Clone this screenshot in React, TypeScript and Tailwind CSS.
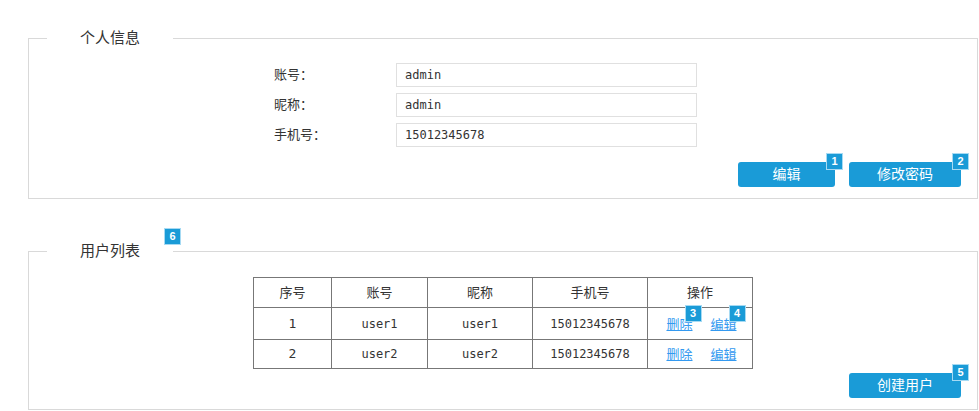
const font = {
  fontFamily: '"DejaVu Sans Mono", "Noto Sans CJK SC", monospace',
};

function Badge({ n, className = "" }: { n: number; className?: string }) {
  return (
    <span
      className={`absolute flex size-[17px] items-center justify-center border border-[#a6daf3] bg-[#1a9bd7] text-[11px] font-bold leading-none text-white ${className}`}
      style={{ fontFamily: '"Liberation Sans", Arial, sans-serif' }}
    >
      {n}
    </span>
  );
}

function BlueButton({ label, width, badge }: { label: string; width: string; badge: number }) {
  return (
    <button
      className={`relative h-[25px] ${width} rounded-[3px] bg-[#1a9bd7] text-[14px] text-white`}
    >
      {label}
      <Badge n={badge} className="-right-[8px] -top-[9px]" />
    </button>
  );
}

const fields = [
  { label: "账号：", value: "admin" },
  { label: "昵称：", value: "admin" },
  { label: "手机号：", value: "15012345678" },
];

const users = [
  { id: 1, account: "user1", nick: "user1", phone: "15012345678" },
  { id: 2, account: "user2", nick: "user2", phone: "15012345678" },
];

export default function App() {
  return (
    <div className="min-h-[411px] bg-white pt-[28px] text-[#333]" style={font}>
      <fieldset className="ml-[28px] mr-[1px] border border-[#d9d9d9] px-0 pb-[11px]">
        <legend className="ml-[18px] px-[33px] text-[15px] leading-[20px]">个人信息</legend>
        <div className="flex flex-col gap-[6px] pl-[245px] pt-[15px]">
          {fields.map((f) => (
            <div key={f.label} className="flex items-center">
              <span className="w-[122px] text-[13px]">{f.label}</span>
              <div className="flex h-[24px] w-[301px] items-center border border-[#e0e0e0] pl-[8px] text-[12px]">
                {f.value}
              </div>
            </div>
          ))}
        </div>
        <div className="mt-[15px] flex justify-end gap-[14px] pr-[16px]">
          <BlueButton label="编辑" width="w-[97px]" badge={1} />
          <BlueButton label="修改密码" width="w-[112px]" badge={2} />
        </div>
      </fieldset>

      <fieldset className="ml-[28px] mr-[1px] mt-[42px] border border-[#d9d9d9] px-0 pb-[11px]">
        <legend className="relative ml-[18px] px-[33px] text-[15px] leading-[20px]">
          用户列表
          <Badge n={6} className="-right-[8px] -top-[13px]" />
        </legend>
        <table className="mx-auto mt-[16px] border-collapse text-center text-[13px]">
          <thead>
            <tr className="h-[30px]">
              <th className="w-[78px] border border-[#777] font-normal">序号</th>
              <th className="w-[96px] border border-[#777] font-normal">账号</th>
              <th className="w-[105px] border border-[#777] font-normal">昵称</th>
              <th className="w-[115px] border border-[#777] font-normal">手机号</th>
              <th className="w-[105px] border border-[#777] font-normal">操作</th>
            </tr>
          </thead>
          <tbody>
            {users.map((u) => (
              <tr key={u.id} className={u.id === 1 ? "h-[32px]" : "h-[29px]"}>
                <td className="border border-[#777]">{u.id}</td>
                <td className="border border-[#777] text-[12px]">{u.account}</td>
                <td className="border border-[#777] text-[12px]">{u.nick}</td>
                <td className="border border-[#777] text-[12px]">{u.phone}</td>
                <td className="border border-[#777]">
                  <div className="flex justify-center gap-[18px] pl-[3px] pt-[2px]">
                    <a className="relative cursor-pointer text-[#3399f0] underline">
                      删除
                      {u.id === 1 && <Badge n={3} className="-right-[9px] -top-[10px]" />}
                    </a>
                    <a className="relative cursor-pointer text-[#3399f0] underline">
                      编辑
                      {u.id === 1 && <Badge n={4} className="-right-[9px] -top-[10px]" />}
                    </a>
                  </div>
                </td>
              </tr>
            ))}
          </tbody>
        </table>
        <div className="mt-[4px] flex justify-end pr-[16px]">
          <BlueButton label="创建用户" width="w-[112px]" badge={5} />
        </div>
      </fieldset>
    </div>
  );
}
